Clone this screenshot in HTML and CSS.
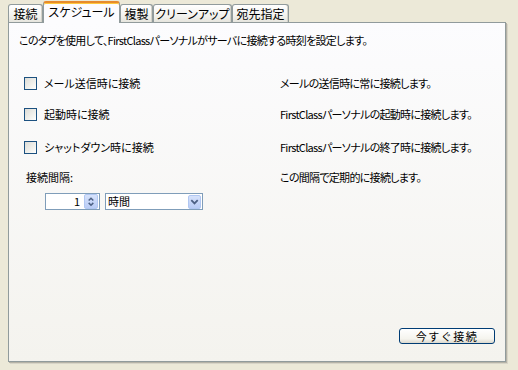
FILE: index.html
```html
<!DOCTYPE html>
<html lang="ja">
<head>
<meta charset="utf-8">
<link rel="stylesheet" href="styles.css">
</head>
<body>
<div class="window">
  <div class="tabs">
    <div class="tab t1">接続</div>
    <div class="tab active t2">スケジュール</div>
    <div class="tab t3">複製</div>
    <div class="tab t4">クリーンアップ</div>
    <div class="tab t5">宛先指定</div>
  </div>
  <div class="panel">
    <p class="desc">このタブを使用して、FirstClassパーソナルがサーバに接続する時刻を設定します。</p>
    <div class="row r1">
      <label class="check"><span class="box"></span><span>メール送信時に接続</span></label>
      <span class="note">メールの送信時に常に接続します。</span>
    </div>
    <div class="row r2">
      <label class="check"><span class="box"></span><span>起動時に接続</span></label>
      <span class="note">FirstClassパーソナルの起動時に接続します。</span>
    </div>
    <div class="row r3">
      <label class="check"><span class="box"></span><span>シャットダウン時に接続</span></label>
      <span class="note">FirstClassパーソナルの終了時に接続します。</span>
    </div>
    <div class="row r4">
      <span class="label">接続間隔:</span>
      <span class="note">この間隔で定期的に接続します。</span>
    </div>
    <div class="controls">
      <div class="spin">
        <span class="value">1</span>
        <span class="spinbtn">
          <svg width="13" height="13" viewBox="0 0 13 13"><path d="M4 5.5 L6.5 3 L9 5.5" fill="none" stroke="#4D6185" stroke-width="1.6"/><path d="M4 8 L6.5 10.5 L9 8" fill="none" stroke="#4D6185" stroke-width="1.6"/></svg>
        </span>
      </div>
      <div class="select">
        <span class="sel-text">時間</span>
        <span class="sel-btn">
          <svg width="12" height="13" viewBox="0 0 12 13"><path d="M2.5 5 L6 8.5 L9.5 5" fill="none" stroke="#4D6185" stroke-width="2"/></svg>
        </span>
      </div>
    </div>
    <button class="connect">今すぐ接続</button>
  </div>
</div>
</body>
</html>
```
FILE: styles.css
```css
html, body {
  margin: 0;
  padding: 0;
}
body {
  background: #ECE9D8;
  width: 518px;
  height: 370px;
  overflow: hidden;
  font-family: "Noto Sans CJK JP", "Noto Sans", sans-serif;
  font-size: 11px;
  font-feature-settings: "palt";
  color: #000;
}
.window {
  padding: 0 0 0 8px;
}
.tabs {
  display: flex;
  align-items: flex-start;
  height: 23px;
  margin-bottom: -1px;
  position: relative;
  z-index: 1;
}
.tab {
  box-sizing: border-box;
  height: 18px;
  margin-top: 4px;
  border: 1px solid #919B9C;
  border-bottom: none;
  border-radius: 3px 3px 0 0;
  background: linear-gradient(#FFFFFF, #F3F3EF 60%, #E6E5DE);
  box-shadow: inset -1px 0 0 #D4D2C8;
  display: flex;
  align-items: center;
  justify-content: center;
  font-size: 12px;
  line-height: 14px;
}
.tab.active {
  height: 22px;
  margin-top: 1px;
  background: #FCFCFE;
  border-top: 2px solid #E68B2C;
  box-shadow: inset 0 1px 0 #FFC83C;
  padding-bottom: 2px;
}
.t1 { width: 35px; }
.t2 { width: 77px; }
.t3 { width: 33px; }
.t4 { width: 79px; }
.t5 { width: 57px; }

.panel {
  box-sizing: border-box;
  width: 498px;
  height: 340px;
  border: 1px solid #919B9C;
  background: linear-gradient(#FCFCFE, #F4F3EE);
  box-shadow: 1px 1px 0 #B5B2A6, 2px 2px 0 #D8D5C8;
  padding: 11px 10px 17px 10px;
  display: flex;
  flex-direction: column;
}
.desc {
  margin: 0;
  line-height: 13px;
  letter-spacing: -0.7px;
}
.row {
  display: grid;
  grid-template-columns: 256px 1fr;
  line-height: 13px;
  padding-left: 5px;
}
.r1 { margin-top: 30px; }
.r2 { margin-top: 18px; }
.r3 { margin-top: 20px; }
.r4 { margin-top: 17px; }
.r4 .label { padding-left: 2px; }
.check {
  display: flex;
  align-items: flex-start;
  gap: 7px;
}
.box {
  box-sizing: border-box;
  width: 13px;
  height: 13px;
  border: 1px solid #1C5180;
  background: linear-gradient(135deg, #DCDCD7, #F4F4F0 70%, #FFFFFF);
}
.note {
  white-space: nowrap;
  letter-spacing: -0.7px;
}
.controls {
  display: flex;
  gap: 5px;
  margin-top: 9px;
  padding-left: 26px;
}
.spin {
  box-sizing: border-box;
  width: 55px;
  height: 17px;
  border: 1px solid #7F9DB9;
  background: #FFFFFF;
  display: flex;
  align-items: center;
  justify-content: flex-end;
  padding-right: 1px;
}
.value {
  margin-right: 4px;
  line-height: 13px;
}
.spinbtn {
  box-sizing: border-box;
  width: 14px;
  height: 15px;
  border-radius: 2px;
  background: linear-gradient(#D6E2FB, #B9CCF6);
  border: 1px solid #B1C7F2;
  display: flex;
  align-items: center;
  justify-content: center;
}
.select {
  box-sizing: border-box;
  width: 98px;
  height: 17px;
  border: 1px solid #7F9DB9;
  background: #FFFFFF;
  display: flex;
  align-items: center;
  justify-content: space-between;
  padding: 1px 1px 1px 2px;
}
.sel-text {
  line-height: 13px;
}
.sel-btn {
  box-sizing: border-box;
  width: 13px;
  height: 14px;
  border-radius: 2px;
  background: linear-gradient(#D6E2FB, #B9CCF6);
  border: 1px solid #B1C7F2;
  display: flex;
  align-items: center;
  justify-content: center;
}
.connect {
  margin-top: auto;
  align-self: flex-end;
  box-sizing: border-box;
  width: 96px;
  height: 16px;
  border: 1px solid #003C74;
  border-radius: 3px;
  background: linear-gradient(#FFFFFF, #F5F4EE 70%, #DCD9CF);
  font-family: inherit;
  font-size: 11px;
  letter-spacing: 1.5px;
  line-height: 12px;
  padding: 0;
  color: #000;
}
```
